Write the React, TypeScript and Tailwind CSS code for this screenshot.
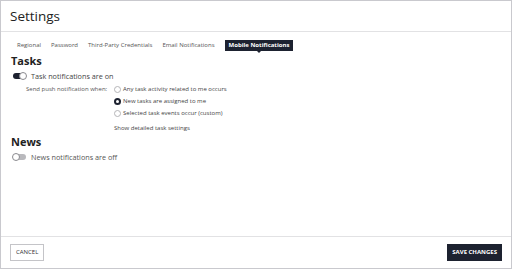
import React from 'react'

const tabs = ['Regional', 'Password', 'Third-Party Credentials', 'Email Notifications']

const Toggle = ({ on }: { on: boolean }) => (
  <div
    className={`relative h-[6px] w-[13px] rounded-full ${on ? 'bg-[#1d2230]' : 'bg-[#b9b9bd]'}`}
  >
    <div
      className={`absolute top-[-1px] h-[8px] w-[8px] rounded-full border border-[#8a8a8f] bg-white ${on ? 'left-[6px]' : 'left-[-1px]'}`}
    />
  </div>
)

const Radio = ({ checked, label }: { checked?: boolean; label: string }) => (
  <div className="flex h-[12px] items-center gap-[2px]">
    {checked ? (
      <div className="flex h-[7px] w-[7px] items-center justify-center rounded-full bg-[#1d2230]">
        <div className="h-[3px] w-[3px] rounded-full bg-white" />
      </div>
    ) : (
      <div className="h-[7px] w-[7px] rounded-full border border-[#b5b5b8] bg-white" />
    )}
    <span className="text-[6px] text-[#444]">{label}</span>
  </div>
)

export default function App() {
  return (
    <div
      className="flex h-[269px] w-[512px] flex-col border border-[#c9c9ce] bg-white"
      style={{ fontFamily: '"Open Sans", "Noto Sans", sans-serif' }}
    >
      <div className="flex h-[31px] items-center border-b border-[#e2e2e4] px-[9px]">
        <h1 className="text-[13.5px] text-[#222]">Settings</h1>
      </div>

      <div className="flex-1 px-[10px]">
        <div className="mt-[8px] flex h-[11px] items-center gap-[10px] pl-[6px] text-[6px] text-[#555]">
          {tabs.map(t => (
            <span key={t}>{t}</span>
          ))}
          <div className="relative">
            <span className="block bg-[#1d2230] px-[4px] leading-[11px] font-bold text-white">Mobile Notifications</span>
            <div className="absolute left-1/2 top-full h-0 w-0 -translate-x-1/2 border-x-[2px] border-t-[2px] border-x-transparent border-t-[#1d2230]" />
          </div>
        </div>

        <h2 className="mt-[4px] text-[11px] font-bold leading-[12px] text-[#222]">Tasks</h2>
        <div className="mt-[3px] flex h-[12px] items-center gap-[5px] pl-[2px]">
          <Toggle on />
          <span className="text-[7.25px] text-[#444]">Task notifications are on</span>
        </div>

        <div className="mt-[1px] flex pl-[15px]">
          <span className="w-[88px] text-[6px] leading-[12px] text-[#555]">Send push notification when:</span>
          <div className="flex flex-col">
            <Radio label="Any task activity related to me occurs" />
            <Radio checked label="New tasks are assigned to me" />
            <Radio label="Selected task events occur (custom)" />
            <span className="mt-[3px] text-[6px] leading-[12px] text-[#444]">Show detailed task settings</span>
          </div>
        </div>

        <h2 className="mt-[1px] text-[11px] font-bold leading-[14px] text-[#222]">News</h2>
        <div className="mt-[2px] flex h-[12px] items-center gap-[5px] pl-[2px]">
          <Toggle on={false} />
          <span className="text-[7.25px] text-[#555]">News notifications are off</span>
        </div>
      </div>

      <div className="flex h-[32px] items-center justify-between border-t border-[#e2e2e4] px-[9px]">
        <button className="h-[17px] border border-[#c4c4c8] bg-white px-[5px] text-[6px] text-[#333]">CANCEL</button>
        <button className="h-[17px] bg-[#1d2230] px-[5px] text-[6px] font-bold text-white">SAVE CHANGES</button>
      </div>
    </div>
  )
}
